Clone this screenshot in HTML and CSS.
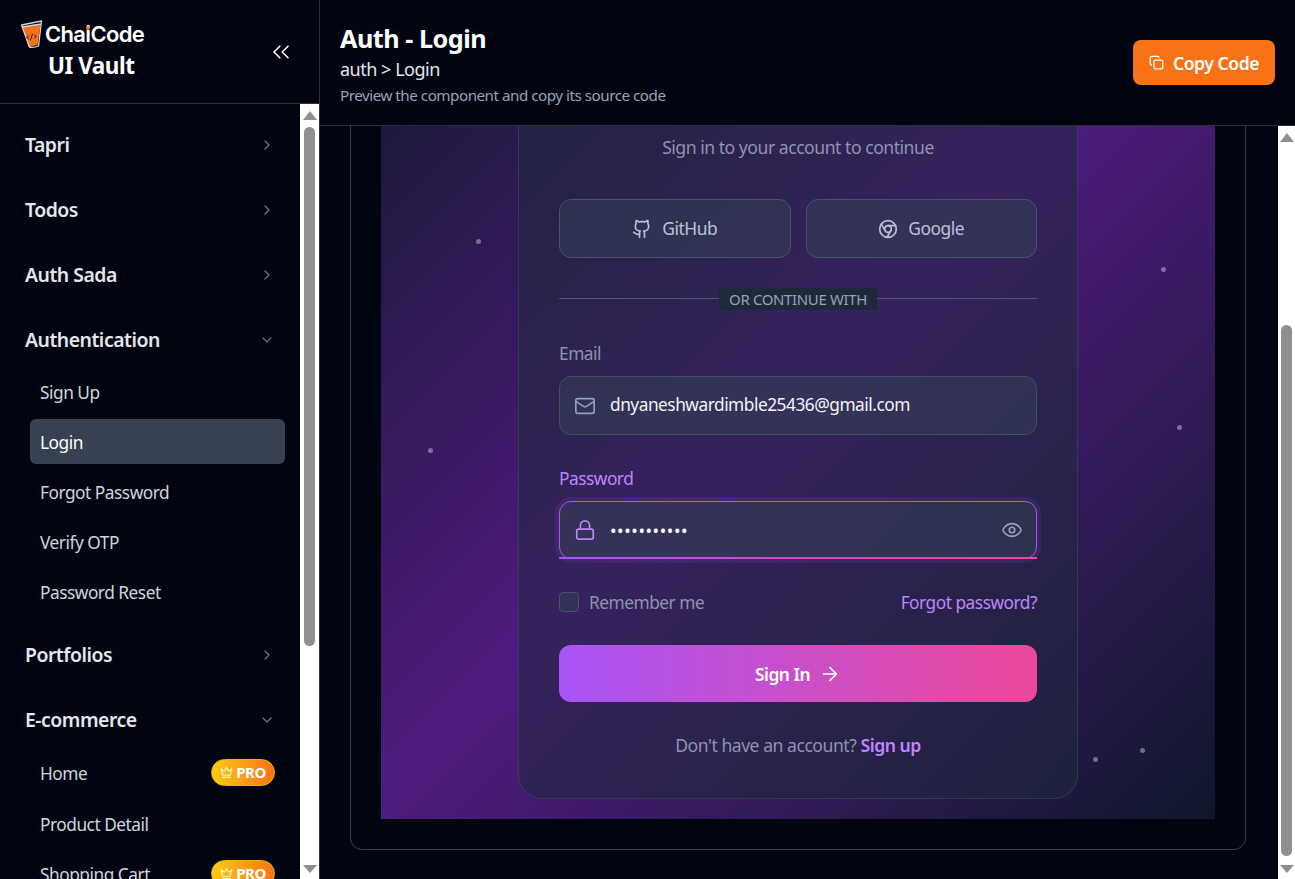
FILE: index.html
```html
<!DOCTYPE html>
<html lang="en">
<head>
    <meta charset="UTF-8">
    <meta name="viewport" content="width=device-width, initial-scale=1.0">
    <title>ChaiCode UI Vault - Auth Login</title>
    <link rel="stylesheet" href="styles.css">
</head>
<body>
    <svg class="icon-defs" aria-hidden="true">
        <symbol id="i-right" viewBox="0 0 24 24"><path d="m9 18 6-6-6-6"/></symbol>
        <symbol id="i-down" viewBox="0 0 24 24"><path d="m6 9 6 6 6-6"/></symbol>
        <symbol id="i-crown" viewBox="0 0 24 24"><path d="M11.562 3.266a.5.5 0 0 1 .876 0L15.39 8.87a1 1 0 0 0 1.516.294L21.183 5.5a.5.5 0 0 1 .798.519l-2.834 10.246a1 1 0 0 1-.956.734H5.81a1 1 0 0 1-.957-.734L2.02 6.02a.5.5 0 0 1 .798-.519l4.276 3.664a1 1 0 0 0 1.516-.294z"/><path d="M5 21h14"/></symbol>
    </svg>

    <aside class="sidebar">
        <div class="brand">
            <div class="brand-text">
                <div class="logo">
                    <svg class="logo-cup" viewBox="0 0 22 28">
                        <path d="M2 7 L20 4 L17 25 L8 27 Z" fill="#f97316"/>
                        <path d="M1 5 L21 1 L18 26 Q13 28 9 27 Z M1.5 7 L20.6 4" fill="none" stroke="#d4d4d8" stroke-width="1.3" stroke-linejoin="round"/>
                        <path d="M8 16l-2 1.5 2 1.5M14 15l2 1.5-2 1.5M12 14l-2 6" fill="none" stroke="#3b1d06" stroke-width="1"/>
                    </svg>
                    <span class="logo-word">ChaiCode<i class="logo-dot"></i></span>
                </div>
                <div class="brand-sub">UI Vault</div>
            </div>
            <svg class="collapse" viewBox="0 0 24 24"><path d="m11 17-5-5 5-5"/><path d="m18 17-5-5 5-5"/></svg>
        </div>
        <div class="side-body">
            <nav class="nav">
                <div class="group">
                    <div class="group-head">Tapri <svg class="chev"><use href="#i-right"/></svg></div>
                </div>
                <div class="group">
                    <div class="group-head">Todos <svg class="chev"><use href="#i-right"/></svg></div>
                </div>
                <div class="group">
                    <div class="group-head">Auth Sada <svg class="chev"><use href="#i-right"/></svg></div>
                </div>
                <div class="group">
                    <div class="group-head">Authentication <svg class="chev"><use href="#i-down"/></svg></div>
                    <ul class="sub">
                        <li>Sign Up</li>
                        <li class="active">Login</li>
                        <li>Forgot Password</li>
                        <li>Verify OTP</li>
                        <li>Password Reset</li>
                    </ul>
                </div>
                <div class="group">
                    <div class="group-head">Portfolios <svg class="chev"><use href="#i-right"/></svg></div>
                </div>
                <div class="group">
                    <div class="group-head">E-commerce <svg class="chev"><use href="#i-down"/></svg></div>
                    <ul class="sub sub-shop">
                        <li class="has-badge">Home <span class="pro"><svg><use href="#i-crown"/></svg>PRO</span></li>
                        <li>Product Detail</li>
                        <li class="has-badge">Shopping Cart <span class="pro"><svg><use href="#i-crown"/></svg>PRO</span></li>
                    </ul>
                </div>
            </nav>
            <div class="scrollbar scrollbar-side">
                <span class="arrow-up"></span>
                <span class="track"><span class="thumb thumb-side"></span></span>
                <span class="arrow-down"></span>
            </div>
        </div>
    </aside>

    <div class="main">
        <header class="topbar">
            <div>
                <h1>Auth - Login</h1>
                <div class="crumb">auth &gt; Login</div>
                <p class="hint">Preview the component and copy its source code</p>
            </div>
            <button class="copy-btn">
                <svg viewBox="0 0 24 24"><rect x="8" y="8" width="14" height="14" rx="2"/><path d="M4 16c-1.1 0-2-.9-2-2V4c0-1.1.9-2 2-2h10c1.1 0 2 .9 2 2"/></svg>
                Copy Code
            </button>
        </header>

        <div class="main-body">
            <div class="content">
                <div class="frame">
                    <div class="preview">
                        <span class="dot dot-1"></span>
                        <span class="dot dot-2"></span>
                        <span class="dot dot-3"></span>
                        <span class="dot dot-4"></span>
                        <span class="dot dot-5"></span>
                        <span class="dot dot-6"></span>

                        <form class="card">
                            <p class="card-sub">Sign in to your account to continue</p>

                            <div class="oauth">
                                <button type="button" class="oauth-btn">
                                    <svg viewBox="0 0 24 24"><path d="M15 22v-4a4.8 4.8 0 0 0-1-3.5c3 0 6-2 6-5.5.08-1.25-.27-2.48-1-3.5.28-1.15.28-2.35 0-3.5 0 0-1 0-3 1.5-2.64-.5-5.36-.5-8 0C6 2 5 2 5 2c-.3 1.15-.3 2.35 0 3.5A5.403 5.403 0 0 0 4 9c0 3.5 3 5.5 6 5.5-.39.49-.68 1.05-.85 1.65-.17.6-.22 1.23-.15 1.85v4"/><path d="M9 18c-4.51 2-5-2-7-2"/></svg>
                                    <span class="oauth-label">GitHub</span>
                                </button>
                                <button type="button" class="oauth-btn">
                                    <svg viewBox="0 0 24 24"><circle cx="12" cy="12" r="10"/><circle cx="12" cy="12" r="4"/><path d="M21.17 8H12"/><path d="M3.95 6.06 8.54 14"/><path d="M10.88 21.94 15.46 14"/></svg>
                                    <span class="oauth-label">Google</span>
                                </button>
                            </div>

                            <div class="divider"><span>OR CONTINUE WITH</span></div>

                            <label class="field-label">Email</label>
                            <div class="field">
                                <svg class="field-icon" viewBox="0 0 24 24"><rect x="2" y="4" width="20" height="16" rx="2"/><path d="m22 7-8.97 5.7a1.94 1.94 0 0 1-2.06 0L2 7"/></svg>
                                <span class="field-value">dnyaneshwardimble25436@gmail.com</span>
                            </div>

                            <label class="field-label field-label-on">Password</label>
                            <div class="field field-on">
                                <svg class="field-icon" viewBox="0 0 24 24"><rect x="3" y="11" width="18" height="11" rx="2"/><path d="M7 11V7a5 5 0 0 1 10 0v4"/></svg>
                                <span class="field-value field-dots">•••••••••••</span>
                                <svg class="eye" viewBox="0 0 24 24"><path d="M2 12s3-7 10-7 10 7 10 7-3 7-10 7-10-7-10-7Z"/><circle cx="12" cy="12" r="3"/></svg>
                            </div>

                            <div class="options">
                                <span class="remember"><span class="check"></span><span class="remember-text">Remember me</span></span>
                                <a class="link">Forgot password?</a>
                            </div>

                            <button type="button" class="submit">
                                Sign In
                                <svg viewBox="0 0 24 24"><path d="M5 12h14"/><path d="m12 5 7 7-7 7"/></svg>
                            </button>

                            <p class="signup">Don't have an account? <a>Sign up</a></p>
                        </form>
                    </div>
                </div>
            </div>
            <div class="scrollbar scrollbar-main">
                <span class="arrow-up"></span>
                <span class="track"><span class="thumb thumb-main"></span></span>
                <span class="arrow-down"></span>
            </div>
        </div>
    </div>
</body>
</html>
```

FILE: styles.css
```css
* {
    box-sizing: border-box;
}
html, body {
    height: 100%;
}
body {
    margin: 0;
    display: flex;
    height: 100vh;
    overflow: hidden;
    background-color: #010512;
    color: #fff;
    font-family: "Noto Sans", "Open Sans", Arial, sans-serif;
    letter-spacing: -0.03em;
}
svg {
    fill: none;
    stroke: currentColor;
    stroke-width: 2;
    stroke-linecap: round;
    stroke-linejoin: round;
}
.icon-defs {
    display: none;
}

/* sidebar */
.sidebar {
    width: 320px;
    flex-shrink: 0;
    display: flex;
    flex-direction: column;
    border-right: 1px solid #2a2f3c;
}
.brand {
    height: 104px;
    flex-shrink: 0;
    display: flex;
    justify-content: space-between;
    align-items: flex-start;
    padding: 19px 24px 0 18px;
    border-bottom: 1px solid #2a2f3c;
}
.logo {
    display: flex;
    align-items: center;
    height: 30px;
}
.logo-cup {
    width: 27px;
    height: 28px;
    stroke: none;
}
.logo-word {
    position: relative;
    font-family: Inter, Arial, sans-serif;
    font-size: 22px;
    font-weight: 600;
    letter-spacing: -0.03em;
}
.logo-dot {
    position: absolute;
    left: 41px;
    top: 5px;
    width: 4px;
    height: 4px;
    border-radius: 50%;
    background-color: #f97316;
}
.brand-sub {
    margin: 1px 0 0 30px;
    font-size: 22.5px;
    font-weight: 700;
}
.collapse {
    width: 28px;
    height: 28px;
    margin-top: 19px;
    stroke-width: 1.3;
}
.side-body {
    flex: 1;
    min-height: 0;
    display: flex;
}
.nav {
    flex: 1;
    min-width: 0;
    overflow: hidden;
    padding: 18px 15px 0 10px;
}
.group {
    margin-bottom: 20px;
}
.group-head {
    height: 45px;
    display: flex;
    justify-content: space-between;
    align-items: center;
    padding: 0 10px 0 15px;
    font-size: 19.4px;
    font-weight: 600;
    color: #e5e7eb;
}
.chev {
    width: 16px;
    height: 16px;
    color: #6b7280;
}
.sub {
    list-style: none;
    margin: 7px 0 -2px;
    padding: 0 0 0 20px;
    display: flex;
    flex-direction: column;
    gap: 5px;
}
.sub-shop {
    margin-top: 8px;
}
.sub li {
    min-height: 45px;
    display: flex;
    justify-content: space-between;
    align-items: center;
    padding: 1px 10px 0 10px;
    border-radius: 6px;
    font-size: 17.3px;
    color: #d1d5db;
}
.sub li.has-badge {
    min-height: 46px;
}
.sub li.active {
    background-color: #374151;
    color: #fff;
}
.pro {
    width: 64px;
    height: 27px;
    display: flex;
    align-items: center;
    justify-content: center;
    gap: 3px;
    margin-top: -3px;
    border: 1px solid #eab308;
    border-radius: 14px;
    background: linear-gradient(90deg, #facc15, #f97316);
    font-size: 15px;
    font-weight: 700;
    color: #fff;
}
.pro svg {
    width: 13px;
    height: 13px;
    color: #fef3c7;
}

/* fake native scrollbars, the page is shown scrolled */
.scrollbar {
    width: 19px;
    flex-shrink: 0;
    display: flex;
    flex-direction: column;
    align-items: center;
    padding: 7px 0 6px;
    background-color: #fff;
}
.scrollbar-main {
    width: 17px;
}
.track {
    flex: 1;
    width: 100%;
    display: flex;
    flex-direction: column;
    align-items: center;
}
.thumb {
    width: 11px;
    border-radius: 6px;
    background-color: #8f8f8f;
}
.thumb-side {
    height: 519px;
    margin-top: 7px;
}
.thumb-main {
    height: 531px;
    margin-top: 183px;
}
.arrow-up {
    width: 0;
    height: 0;
    border-left: 7px solid transparent;
    border-right: 7px solid transparent;
    border-bottom: 9px solid #8f8f8f;
}
.arrow-down {
    width: 0;
    height: 0;
    border-left: 7px solid transparent;
    border-right: 7px solid transparent;
    border-top: 8px solid #8f8f8f;
}

/* main */
.main {
    flex: 1;
    min-width: 0;
    display: flex;
    flex-direction: column;
}
.topbar {
    height: 126px;
    flex-shrink: 0;
    display: flex;
    justify-content: space-between;
    align-items: flex-start;
    padding: 21px 20px 0;
    border-bottom: 1px solid #2a2f3c;
}
h1 {
    margin: 0;
    font-size: 25.2px;
    line-height: 34px;
    font-weight: 700;
}
.crumb {
    margin-top: 2px;
    font-size: 18px;
    line-height: 24px;
    color: #e5e7eb;
}
.hint {
    margin: 4px 0 0;
    font-size: 15.2px;
    line-height: 20px;
    color: #9ca3af;
}
.copy-btn {
    width: 142px;
    height: 45px;
    margin-top: 19px;
    display: flex;
    align-items: center;
    justify-content: center;
    gap: 9px;
    border: none;
    border-radius: 8px;
    background-color: #f97316;
    color: #fff;
    font-family: inherit;
    letter-spacing: inherit;
    font-size: 17.6px;
    font-weight: 600;
}
.copy-btn svg {
    width: 15px;
    height: 15px;
}
.main-body {
    flex: 1;
    min-height: 0;
    display: flex;
}
.content {
    flex: 1;
    min-width: 0;
    overflow: hidden;
    display: flex;
    flex-direction: column;
    justify-content: flex-end;
    padding: 0 32px 29px 30px;
}
.frame {
    flex-shrink: 0;
    padding: 30px;
    border: 1px solid #374151;
    border-radius: 12px;
}
.preview {
    position: relative;
    height: 879px;
    display: flex;
    flex-direction: column;
    justify-content: flex-end;
    align-items: center;
    padding-bottom: 20px;
    background: linear-gradient(135deg, #0f172a, #4f1c7f, #0f172a);
}
.dot {
    position: absolute;
    width: 5px;
    height: 5px;
    border-radius: 50%;
    background-color: rgba(203, 190, 225, 0.5);
}
.dot-1 { left: 95px; bottom: 575px; }
.dot-2 { left: 780px; bottom: 547px; }
.dot-3 { left: 47px; bottom: 366px; }
.dot-4 { left: 796px; bottom: 389px; }
.dot-5 { left: 712px; bottom: 57px; }
.dot-6 { left: 759px; bottom: 66px; }

/* login card, its top part is scrolled away under the topbar */
.card {
    width: 560px;
    padding: 173px 40px 41px;
    border: 1px solid rgba(71, 85, 105, 0.45);
    border-radius: 24px;
    background-color: rgba(30, 41, 59, 0.5);
}
.card-sub {
    margin: 0 0 2px;
    text-align: center;
    font-size: 17.6px;
    line-height: 24px;
    color: #8f93b0;
}
.oauth {
    display: flex;
    gap: 15px;
    margin-top: 40px;
}
.oauth-btn {
    flex: 1;
    height: 59px;
    display: flex;
    align-items: center;
    justify-content: center;
    gap: 10px;
    border: 1px solid #4a5270;
    border-radius: 12px;
    background-color: rgba(51, 65, 85, 0.5);
    color: #bcc2d6;
    font-family: inherit;
    letter-spacing: inherit;
    font-size: 17.4px;
}
.oauth-label {
    margin-top: -1px;
}
.oauth-btn svg {
    width: 20px;
    height: 20px;
}
.divider {
    position: relative;
    display: flex;
    justify-content: center;
    margin-top: 30px;
}
.divider::before {
    content: "";
    position: absolute;
    left: 0;
    right: 0;
    top: 10px;
    height: 1px;
    background-color: #4b5c68;
}
.divider span {
    position: relative;
    padding: 0 10px;
    background-color: #1e293b;
    font-size: 15px;
    line-height: 22px;
    letter-spacing: -0.025em;
    color: #94a3b8;
}
.field-label {
    display: block;
    margin: 32px 0 10px;
    font-size: 17.3px;
    line-height: 24px;
    color: #8f93b0;
}
.field-label-on {
    color: #c084fc;
}
.field {
    position: relative;
    height: 59px;
    display: flex;
    align-items: center;
    padding: 0 14px;
    border: 1px solid #42525c;
    border-radius: 12px;
    background-color: rgba(51, 65, 85, 0.5);
}
.field-icon {
    width: 22px;
    height: 22px;
    stroke-width: 1.8;
    color: #94a3b8;
}
.field-value {
    margin: -2px 0 0 14px;
    font-size: 17.3px;
    color: #f1f5f9;
}
.field-on {
    height: 58px;
    border-color: #a855f7;
    box-shadow: 0 0 0 4px rgba(168, 85, 247, 0.12);
}
.field-on::after {
    content: "";
    position: absolute;
    left: -1px;
    right: -1px;
    bottom: -1px;
    height: 2px;
    background: linear-gradient(90deg, #a855f7, #ec4899);
}
.field-on .field-icon {
    color: #c084fc;
}
.field-dots {
    flex: 1;
    margin-top: 0;
    letter-spacing: 0.6px;
    color: #fff;
}
.eye {
    width: 22px;
    height: 22px;
    margin-right: -1px;
    stroke-width: 1.8;
    color: #94a3b8;
}
.options {
    display: flex;
    justify-content: space-between;
    align-items: center;
    height: 26px;
    margin-top: 30px;
    font-size: 17.3px;
    line-height: 24px;
}
.remember {
    display: flex;
    align-items: center;
    gap: 10px;
    color: #8f93b0;
}
.link {
    margin-top: 2px;
    color: #c084fc;
}
.remember-text {
    margin-top: 2px;
}
.check {
    width: 20px;
    height: 20px;
    border: 1px solid #475569;
    border-radius: 4px;
    background-color: rgba(51, 65, 85, 0.5);
}
.submit {
    width: 100%;
    height: 57px;
    margin-top: 30px;
    display: flex;
    align-items: center;
    justify-content: center;
    gap: 9px;
    border: none;
    border-radius: 12px;
    background: linear-gradient(90deg, #a855f7, #ec4899);
    color: #fff;
    font-family: inherit;
    letter-spacing: inherit;
    font-size: 17.4px;
    font-weight: 600;
}
.submit svg {
    width: 22px;
    height: 22px;
    stroke-width: 1.8;
}
.signup {
    margin: 31px 0 0;
    text-align: center;
    font-size: 17.6px;
    line-height: 24px;
    color: #8f93b0;
}
.signup a {
    font-weight: 600;
    color: #c084fc;
}
```
